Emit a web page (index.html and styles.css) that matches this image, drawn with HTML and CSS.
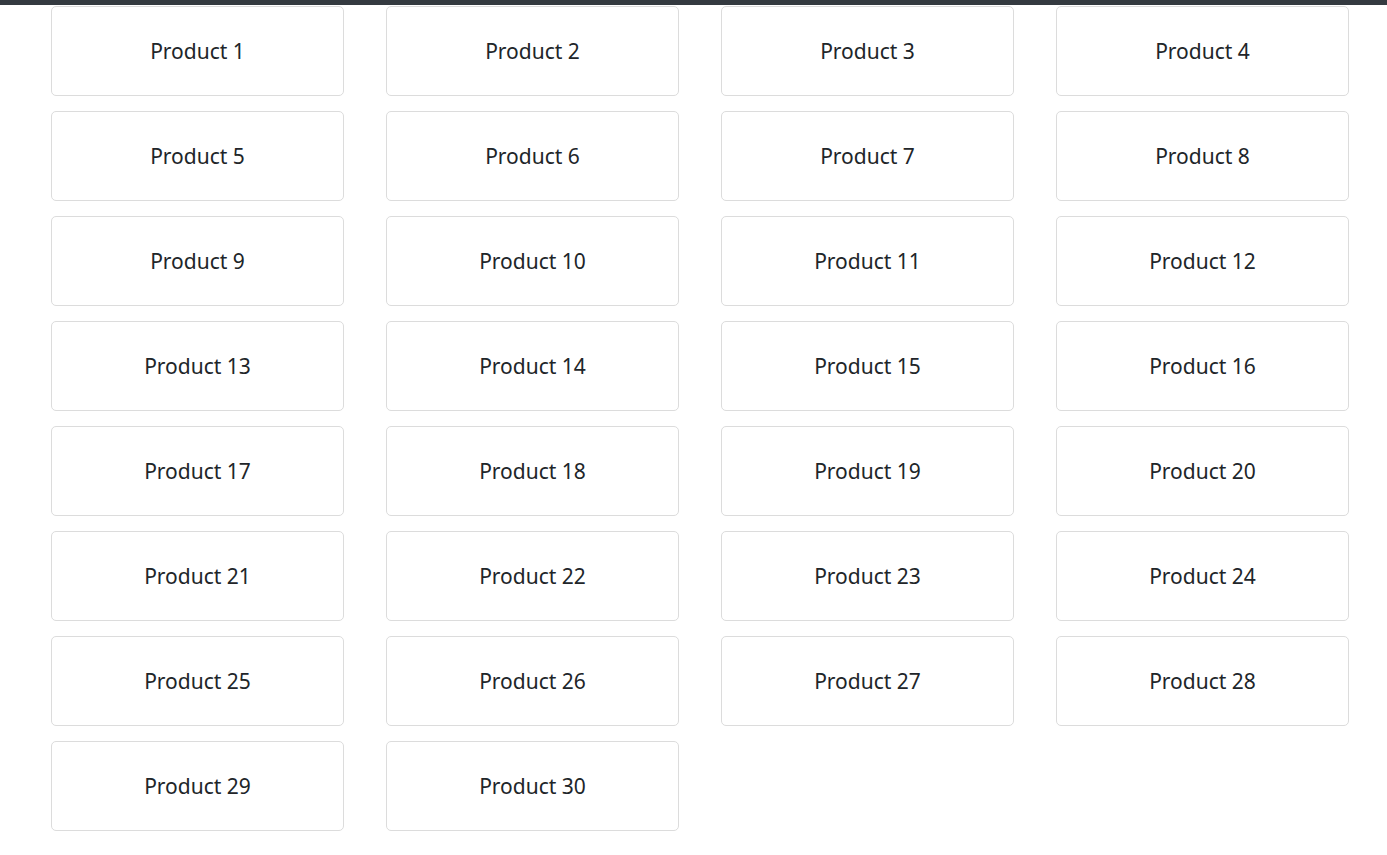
FILE: index.html
```html
<!DOCTYPE html>
<html>
<head>
<meta charset="utf-8">
<link rel="stylesheet" href="styles.css">
</head>
<body>
<div class="topbar"></div>
<div class="grid">
<div class="card">Product 1</div>
<div class="card">Product 2</div>
<div class="card">Product 3</div>
<div class="card">Product 4</div>
<div class="card">Product 5</div>
<div class="card">Product 6</div>
<div class="card">Product 7</div>
<div class="card">Product 8</div>
<div class="card">Product 9</div>
<div class="card">Product 10</div>
<div class="card">Product 11</div>
<div class="card">Product 12</div>
<div class="card">Product 13</div>
<div class="card">Product 14</div>
<div class="card">Product 15</div>
<div class="card">Product 16</div>
<div class="card">Product 17</div>
<div class="card">Product 18</div>
<div class="card">Product 19</div>
<div class="card">Product 20</div>
<div class="card">Product 21</div>
<div class="card">Product 22</div>
<div class="card">Product 23</div>
<div class="card">Product 24</div>
<div class="card">Product 25</div>
<div class="card">Product 26</div>
<div class="card">Product 27</div>
<div class="card">Product 28</div>
<div class="card">Product 29</div>
<div class="card">Product 30</div>
</div>
</body>
</html>
```
FILE: styles.css
```css
html, body {
  margin: 0;
  padding: 0;
  background: #fff;
}
body {
  font-family: "Noto Sans", "Open Sans", sans-serif;
  color: #212529;
}
.topbar {
  height: 5px;
  background: #343a40;
}
.grid {
  display: grid;
  grid-template-columns: repeat(4, 293px);
  column-gap: 42px;
  row-gap: 15px;
  padding: 1px 0 20px 51px;
}
.card {
  box-sizing: border-box;
  height: 90px;
  border: 1px solid #dcdcdc;
  border-radius: 5px;
  display: flex;
  align-items: center;
  justify-content: center;
  font-size: 21px;
}
```
